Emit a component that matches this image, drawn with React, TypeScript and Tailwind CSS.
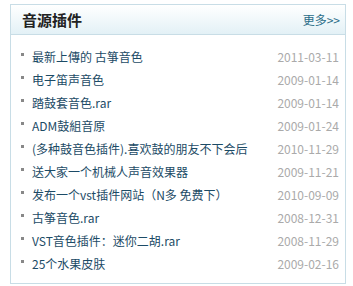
import React from "react";

const items: [string, string][] = [
  ["最新上傳的 古箏音色", "2011-03-11"],
  ["电子笛声音色", "2009-01-14"],
  ["踏鼓套音色.rar", "2009-01-14"],
  ["ADM鼓組音原", "2009-01-24"],
  ["(多种鼓音色插件).喜欢鼓的朋友不下会后", "2010-11-29"],
  ["送大家一个机械人声音效果器", "2009-11-21"],
  ["发布一个vst插件网站（N多 免费下）", "2010-09-09"],
  ["古筝音色.rar", "2008-12-31"],
  ["VST音色插件：迷你二胡.rar", "2008-11-29"],
  ["25个水果皮肤", "2009-02-16"],
];

export default function App() {
  return (
    <div
      className="w-[353px] h-[286px] bg-white pt-[4px] pl-[10px]"
      style={{ fontFamily: '"Noto Sans CJK SC", "Liberation Sans", sans-serif' }}
    >
      <div className="w-[336px] h-[280px] border border-[#c8dde6] bg-white">
        <div className="h-[30px] flex items-center justify-between pl-[11px] pr-[5px] border-b border-[#c8dde6] bg-gradient-to-b from-white to-[#e3f1f6]">
          <span className="text-[15px] font-bold text-[#222] leading-none">音源插件</span>
          <span className="text-[12px] text-[#2a6d88] leading-none">更多&gt;&gt;</span>
        </div>
        <ul className="pt-[10px] pl-[10px] pr-[6px]">
          {items.map(([t, d]) => (
            <li key={t} className="h-[23px] flex items-center justify-between">
              <span className="flex items-center text-[12px] text-[#1c4b66]">
                <span className="w-[3px] h-[3px] bg-[#888] mr-[8px] mt-[-4px]" />
                {t}
              </span>
              <span className="text-[12px] text-[#aaa]">{d}</span>
            </li>
          ))}
        </ul>
      </div>
    </div>
  );
}
